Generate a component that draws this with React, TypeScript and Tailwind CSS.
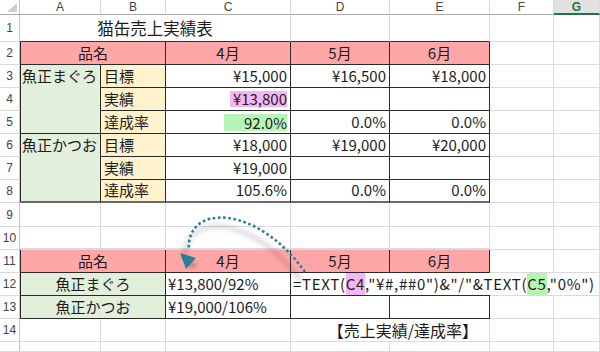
import React from "react";

// grid lines
const L = "border-r-[#dadada] border-b-[#dadada]";
const D = "border-r-[#2a2a2a] border-b-[#2a2a2a]";
const BASE = "flex items-center whitespace-nowrap border-r border-b";

const PINK = "bg-[#ffa7a7]";
const GREEN = "bg-[#e2efda]";
const CREAM = "bg-[#fff2cc]";

const COLS = ["A", "B", "C", "D", "E", "F", "G"];

function Cell({ className = "", children }: { className?: string; children?: React.ReactNode }) {
  return <div className={`${BASE} ${className}`}>{children}</div>;
}

function RowNum({ n }: { n?: number }) {
  return (
    <Cell className="justify-center leading-none font-['Liberation_Sans',sans-serif] text-[12px] text-[#444] border-r-[#c4c4c4] border-b-[#dadada]">
      {n}
    </Cell>
  );
}

// light empty cell
function E({ className = "" }: { className?: string }) {
  return <Cell className={`${L} ${className}`} />;
}

function Num({ children, className = "" }: { children?: React.ReactNode; className?: string }) {
  return <Cell className={`${D} justify-end pr-[3px] ${className}`}>{children}</Cell>;
}

function Label({ children, className = "" }: { children?: React.ReactNode; className?: string }) {
  return <Cell className={`${D} ${CREAM} pl-[3px] ${className}`}>{children}</Cell>;
}

function Head({ children, className = "" }: { children?: React.ReactNode; className?: string }) {
  return <Cell className={`${D} ${PINK} justify-center ${className}`}>{children}</Cell>;
}

function Arrow() {
  const d = "M305,272 C255,202 185,205 189,250";
  return (
    <svg className="absolute left-0 top-0 pointer-events-none" width="600" height="352" viewBox="0 0 600 352">
      <defs>
        <filter id="blur" x="-20%" y="-20%" width="140%" height="140%">
          <feGaussianBlur stdDeviation="2" />
        </filter>
      </defs>
      <path d={d} transform="translate(-4,9)" fill="none" stroke="#000" strokeOpacity="0.13" strokeWidth="5" filter="url(#blur)" />
      <path d={d} fill="none" stroke="#2b7d9c" strokeWidth="2.6" strokeDasharray="2.6 2.6" />
      <ellipse cx="192" cy="265" rx="5" ry="3" fill="#5a3a30" opacity="0.35" filter="url(#blur)" />
      <polygon points="180,253 196,258 186,269" fill="#2b7d9c" />
    </svg>
  );
}

export default function App() {
  return (
    <div className="relative w-[600px] h-[352px] overflow-hidden bg-white text-[15px] text-[#1c1c1c] font-['Noto_Sans_CJK_JP','Noto_Sans',sans-serif]">
      <div className="grid h-full grid-cols-[20px_81px_65px_125px_99px_100px_64px_1fr] grid-rows-[15px_27px_repeat(7,23px)_24px_repeat(5,23px)_1fr]">
        {/* column headers */}
        <Cell className="relative border-r-[#c4c4c4] border-b-[#ababab]">
          <svg className="absolute right-[2px] bottom-[2px]" width="10" height="9" viewBox="0 0 10 9">
            <polygon points="10,0 10,9 0,9" fill="#cfcfcf" />
          </svg>
        </Cell>
        {COLS.map((c) => (
          <Cell
            key={c}
            className={`justify-center leading-none font-['Liberation_Sans',sans-serif] text-[12px] border-r-[#dadada] ${
              c === "G"
                ? "bg-[#e1e1e1] text-[#217346] font-bold border-b-2 border-b-[#217346]"
                : "text-[#444] border-b-[#ababab]"
            }`}
          >
            {c}
          </Cell>
        ))}

        {/* row 1 */}
        <RowNum n={1} />
        <Cell className="col-span-3 justify-center text-[16.5px] border-r-[#dadada] border-b-[#333]">猫缶売上実績表</Cell>
        <Cell className="border-r-[#dadada] border-b-[#333]" />
        <Cell className="border-r-[#dadada] border-b-[#333]" />
        <E />
        <E />

        {/* row 2 */}
        <RowNum n={2} />
        <Head className="col-span-2 border-l border-l-[#2a2a2a]">品名</Head>
        <Head>4月</Head>
        <Head>5月</Head>
        <Head>6月</Head>
        <E />
        <E />

        {/* row 3 */}
        <RowNum n={3} />
        <Cell className={`${D} ${GREEN} row-span-3 items-start border-l border-l-[#2a2a2a]`}>
          <div className="h-[22px] flex items-center pl-[1px]">魚正まぐろ</div>
        </Cell>
        <Label>目標</Label>
        <Num>¥15,000</Num>
        <Num>¥16,500</Num>
        <Num>¥18,000</Num>
        <E />
        <E />

        {/* row 4 */}
        <RowNum n={4} />
        <Label>実績</Label>
        <Num>
          <span className="bg-[#f6b5f4] leading-[16px] pl-[3px]">¥13,800</span>
        </Num>
        <Num />
        <Num />
        <E />
        <E />

        {/* row 5 */}
        <RowNum n={5} />
        <Label>達成率</Label>
        <Num>
          <span className="bg-[#b7f5b6] leading-[17px] pl-[20px]">92.0%</span>
        </Num>
        <Num>0.0%</Num>
        <Num>0.0%</Num>
        <E />
        <E />

        {/* row 6 */}
        <RowNum n={6} />
        <Cell className={`${GREEN} row-span-3 items-start border-l border-l-[#2a2a2a] border-r-[#2a2a2a] border-b-2 border-b-[#6a6a6a]`}>
          <div className="h-[22px] flex items-center pl-[1px]">魚正かつお</div>
        </Cell>
        <Label>目標</Label>
        <Num>¥18,000</Num>
        <Num>¥19,000</Num>
        <Num>¥20,000</Num>
        <E />
        <E />

        {/* row 7 */}
        <RowNum n={7} />
        <Label>実績</Label>
        <Num>¥19,000</Num>
        <Num />
        <Num />
        <E />
        <E />

        {/* row 8 */}
        <RowNum n={8} />
        <Label className="border-b-2 border-b-[#6a6a6a]">達成率</Label>
        <Num className="border-b-2 border-b-[#6a6a6a]">105.6%</Num>
        <Num className="border-b-2 border-b-[#6a6a6a]">0.0%</Num>
        <Num className="border-b-2 border-b-[#6a6a6a]">0.0%</Num>
        <E />
        <E />

        {/* row 9 */}
        <RowNum n={9} />
        <E />
        <E />
        <E />
        <E />
        <E />
        <E />
        <E />

        {/* row 10 */}
        <RowNum n={10} />
        <E className="border-b-2 border-b-[#6a6a6a]" />
        <E className="border-b-2 border-b-[#6a6a6a]" />
        <E className="border-b-2 border-b-[#6a6a6a]" />
        <E className="border-b-2 border-b-[#6a6a6a]" />
        <E className="border-b-2 border-b-[#6a6a6a]" />
        <E />
        <E />

        {/* row 11 */}
        <RowNum n={11} />
        <Head className="col-span-2 border-l border-l-[#2a2a2a]">品名</Head>
        <Head>4月</Head>
        <Head>5月</Head>
        <Head>6月</Head>
        <E />
        <E />

        {/* row 12 */}
        <RowNum n={12} />
        <Cell className={`${D} ${GREEN} col-span-2 justify-center border-l border-l-[#2a2a2a]`}>魚正まぐろ</Cell>
        <Cell className={`${D} pl-[2px]`}>¥13,800/92%</Cell>
        <Cell className="relative z-10 pl-[2px] tracking-[0.7px] border-r-0 border-b-[#2a2a2a]">
          =TEXT(<span className="bg-[#f6b5f4]">C4</span>,"¥#,##0")&amp;"/"&amp;TEXT(
          <span className="bg-[#b7f5b6]">C5</span>,"0%")
        </Cell>
        <Cell className="border-r-0 border-b-[#2a2a2a]" />
        <Cell className="border-r-0 border-b-[#dadada]" />
        <E />

        {/* row 13 */}
        <RowNum n={13} />
        <Cell className={`${D} ${GREEN} col-span-2 justify-center border-l border-l-[#2a2a2a]`}>魚正かつお</Cell>
        <Cell className={`${D} pl-[2px]`}>¥19,000/106%</Cell>
        <Cell className={D} />
        <Cell className={D} />
        <E />
        <E />

        {/* row 14 */}
        <RowNum n={14} />
        <E />
        <E />
        <E />
        <Cell className={`${L} col-span-2 justify-end pr-[11px] text-[16px]`}>【売上実績/達成率】</Cell>
        <E />
        <E />

        {/* row 15, only a sliver is visible */}
        <RowNum />
        <E />
        <E />
        <E />
        <E />
        <E />
        <E />
        <E />
      </div>
      <Arrow />
    </div>
  );
}
